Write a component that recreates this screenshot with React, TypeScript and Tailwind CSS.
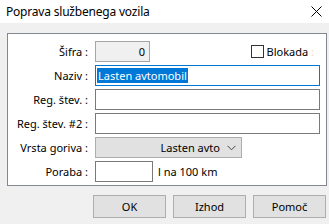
import React from "react";

const labelCls = "w-[81px] shrink-0 text-right pr-[1px] whitespace-nowrap";
const boxCls = "h-[21px] border border-[#7a7a7a] bg-white";

function Row({ label, children }: { label: string; children: React.ReactNode }) {
  return (
    <div className="flex h-[21px] items-center gap-[6px]">
      <div className={labelCls}>{label}</div>
      {children}
    </div>
  );
}

export default function App() {
  return (
    <div
      className="flex h-[224px] w-[329px] flex-col overflow-hidden bg-[#f0f0f0] text-[11px] leading-none text-black"
      style={{ fontFamily: '"Noto Sans", "Open Sans", sans-serif' }}
    >
      {/* ── Title bar ─────────────────────────────────────────── */}
      <div className="flex h-[23px] shrink-0 items-center justify-between bg-white pl-[6px] pr-[7px]">
        <span className="text-[12px] tracking-[-0.2px]">Poprava službenega vozila</span>
        <svg width="11" height="11" viewBox="0 0 11 11" className="text-black">
          <path d="M0.5 0.5 L10.5 10.5 M10.5 0.5 L0.5 10.5" stroke="currentColor" strokeWidth="1" />
        </svg>
      </div>

      {/* ── Group box ─────────────────────────────────────────── */}
      <div className="ml-[7px] mt-[10px] w-[320px] border border-[#828790] bg-white pb-[3px] pl-0 pr-[6px] pt-[7px]">
        <div className="flex flex-col gap-[3px]">
          <Row label="Šifra :">
            <div className="flex h-[21px] w-[55px] items-center justify-end border border-[#a6a6a6] bg-[#f0f0f0] pr-[4px]">
              0
            </div>
            <div className="ml-auto flex items-center gap-[3px] pr-[6px]">
              <div className="h-[13px] w-[13px] border border-[#333333] bg-white" />
              <span>
                Blokada <span className="text-[#f5d9a8]">:</span>
              </span>
            </div>
          </Row>
          <Row label="Naziv :">
            <div className="flex h-[21px] flex-1 items-center border border-[#0078d7] bg-white pl-[1px]">
              <span className="flex h-[15px] items-center bg-[#0078d7] px-[1px] text-white">Lasten avtomobil</span>
            </div>
          </Row>
          <Row label="Reg. štev. :">
            <div className={`${boxCls} flex-1`} />
          </Row>
          <Row label="Reg. štev. #2 :">
            <div className={`${boxCls} flex-1`} />
          </Row>
          <Row label="Vrsta goriva :">
            <div className="flex h-[21px] w-[147px] items-center justify-end gap-[7px] border border-[#adadad] bg-[#e1e1e1] pr-[5px]">
              <span>Lasten avto</span>
              <svg width="9" height="6" viewBox="0 0 9 6">
                <path d="M0.5 0.8 L4.5 4.8 L8.5 0.8" stroke="#444" strokeWidth="1" fill="none" />
              </svg>
            </div>
          </Row>
          <Row label="Poraba :">
            <div className={`${boxCls} w-[58px]`} />
            <span className="-ml-[1px]">l na 100 km</span>
          </Row>
        </div>
      </div>

      {/* ── Buttons ───────────────────────────────────────────── */}
      <div className="ml-[93px] mt-[9px] flex gap-[7px]">
        {["OK", "Izhod", "Pomoč"].map((b) => (
          <button
            key={b}
            className="flex h-[23px] w-[73px] items-center justify-center border border-[#adadad] bg-[#e1e1e1]"
          >
            {b}
          </button>
        ))}
      </div>
    </div>
  );
}
